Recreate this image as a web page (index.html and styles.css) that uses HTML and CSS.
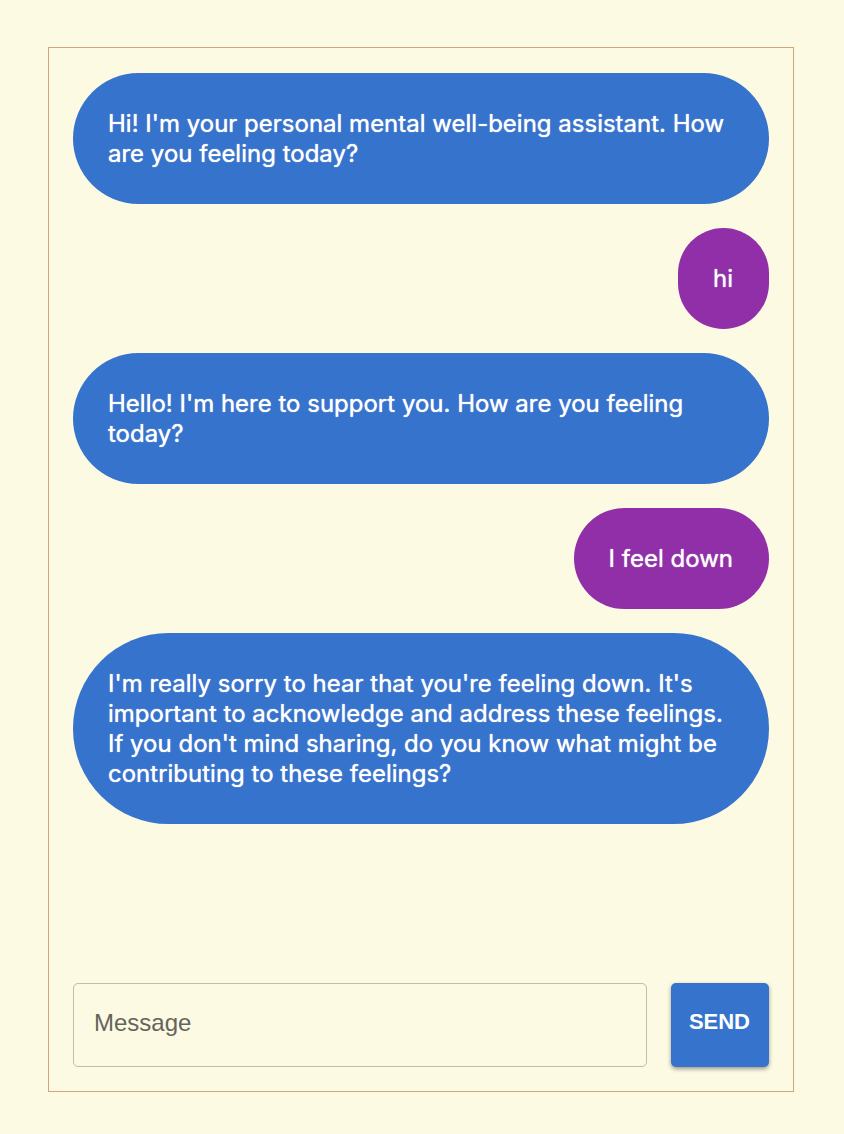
FILE: index.html
```html
<!DOCTYPE html>
<html lang="en">
<head>
<meta charset="utf-8">
<meta name="viewport" content="width=device-width, initial-scale=1">
<title>Well-being assistant</title>
<link rel="stylesheet" href="styles.css">
</head>
<body>
<main class="chat">
  <div class="messages">
    <p class="message assistant">Hi! I'm your personal mental well-being assistant. How are you feeling today?</p>
    <p class="message user">hi</p>
    <p class="message assistant">Hello! I'm here to support you. How are you feeling today?</p>
    <p class="message user">I feel down</p>
    <p class="message assistant">I'm really sorry to hear that you're feeling down. It's important to acknowledge and address these feelings. If you don't mind sharing, do you know what might be contributing to these feelings?</p>
  </div>
  <form class="composer">
    <input class="field" type="text" placeholder="Message" aria-label="Message">
    <button class="send" type="button">SEND</button>
  </form>
</main>
</body>
</html>
```

FILE: styles.css
```css
* {
  box-sizing: border-box;
}

body {
  margin: 0;
  min-height: 100vh;
  padding: 47px 50px 42px 48px;
  display: flex;
  background: #fdfae3;
  font-family: Inter, "Liberation Sans", sans-serif;
}

.chat {
  flex: 1;
  min-width: 0;
  padding: 25px 24px 24px;
  display: flex;
  flex-direction: column;
  gap: 24px;
  border: 1px solid #cfa67c;
}

.messages {
  flex: 1;
  display: flex;
  flex-direction: column;
  gap: 24px;
}

.message {
  margin: 0;
  padding: 36px 36px 35px;
  padding-left: 35px;
  border-radius: 96px;
  color: #fff;
  font-size: 24px;
  font-weight: 400;
  line-height: 30px;
  text-shadow: 0 0 1px #fff;
}

.assistant {
  align-self: stretch;
  background: #3673cc;
}

.user {
  align-self: flex-end;
  background: #902fa8;
}

.composer {
  display: flex;
  gap: 24px;
}

.field {
  flex: 1;
  min-width: 0;
  height: 84px;
  padding: 0 20px 4px;
  border: 1px solid #bfbdac;
  border-radius: 5px;
  background: transparent;
  color: #222;
  font: 24px "Liberation Sans", sans-serif;
}

.field::placeholder {
  color: #65645b;
  opacity: 1;
}

.send {
  padding: 0 19px 6px 18px;
  border: 0;
  border-radius: 5px;
  background: #3673cc;
  box-shadow: 0 2px 4px #0006;
  color: #fff;
  font: bold 22px "Liberation Sans", sans-serif;
}
```
